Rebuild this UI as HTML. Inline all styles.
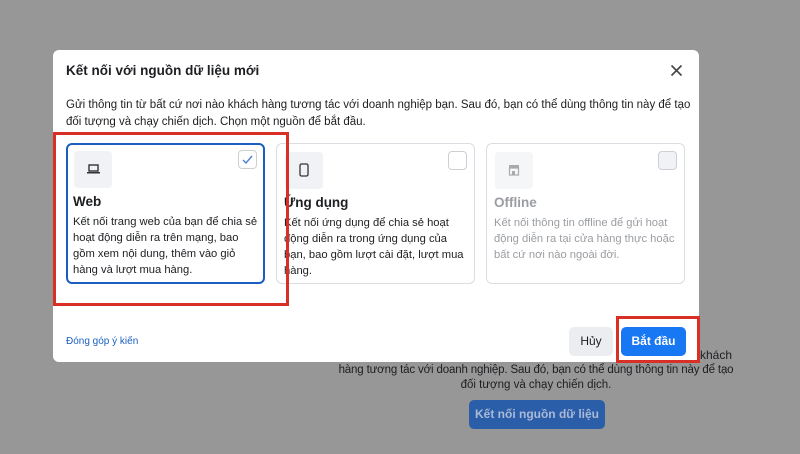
<!DOCTYPE html>
<html><head><meta charset="utf-8"><style>
*{margin:0;padding:0;box-sizing:border-box}
body{width:800px;height:454px;background:#979797;font-family:"Liberation Sans",sans-serif;position:relative;overflow:hidden;color:#1c1e21}
.a{position:absolute}
.bt{font-size:12px;color:#1c1e21;line-height:16px;text-align:center;white-space:nowrap}
.modal{left:53px;top:50px;width:646px;height:312px;background:#fff;border-radius:6px}
.card{position:absolute;top:143px;width:199px;height:141px;border:1px solid #dadde1;border-radius:6px;background:#fff}
.ic{position:absolute;left:8px;top:8px;width:38px;height:37px;background:#f0f2f5;border-radius:4px}
.cb{position:absolute;right:7px;top:7px;width:19px;height:19px;border:1px solid #ccd0d5;border-radius:4px;background:#fff}
.ct{position:absolute;left:7px;top:51px;font-size:13.5px;font-weight:bold}
.cd{position:absolute;left:7px;top:71px;font-size:11.2px;line-height:16px;color:#1c1e21;white-space:nowrap}
</style></head><body>
<div class="a bt" style="left:700px;top:347px;text-align:left">khách</div>
<div class="a bt" style="left:337px;top:362px;width:398px;font-size:11.5px;letter-spacing:-0.15px">hàng tương tác với doanh nghiệp. Sau đó, bạn có thể dùng thông tin này để tạo</div>
<div class="a bt" style="left:337px;top:377px;width:398px;font-size:11.5px">đối tượng và chạy chiến dịch.</div>
<div class="a" style="left:469px;top:400px;width:136px;height:29px;background:#2b5ea8;border-radius:5px;color:#aab9d6;font-size:12px;font-weight:bold;text-align:center;line-height:29px">Kết nối nguồn dữ liệu</div>

<div class="a modal">
<div class="a" style="left:13px;top:13px;font-size:13.5px;font-weight:bold">Kết nối với nguồn dữ liệu mới</div>
<svg class="a" style="left:617px;top:14px" width="13" height="13" viewBox="0 0 13 13"><path d="M1.5 1.5L11.5 11.5M11.5 1.5L1.5 11.5" stroke="#444" stroke-width="1.6"/></svg>
<div class="a" style="left:13px;top:47px;font-size:11.5px;line-height:17px;width:630px;white-space:nowrap">Gửi thông tin từ bất cứ nơi nào khách hàng tương tác với doanh nghiệp bạn. Sau đó, bạn có thể dùng thông tin này để tạo<br>đối tượng và chạy chiến dịch. Chọn một nguồn để bắt đầu.</div>
<div class="a" style="left:13px;top:286px;font-size:10px;color:#1a5fbf">Đóng góp ý kiến</div>
<div class="a" style="left:516px;top:277px;width:44px;height:29px;background:#ebedf0;border-radius:5px;font-size:12px;text-align:center;line-height:29px">Hủy</div>
<div class="a" style="left:568px;top:277px;width:65px;height:29px;background:#1877f2;border-radius:5px;font-size:12px;font-weight:bold;color:#fff;text-align:center;line-height:29px">Bắt đầu</div>
</div>

<div class="card" style="left:66px;border:2px solid #1a5fbf">
<div class="ic" style="left:6px;top:6px"><svg style="position:absolute;left:13px;top:13px" width="13" height="10"><rect x="2" y="1" width="9" height="6" fill="none" stroke="#333" stroke-width="1.4"/><rect x="0" y="8" width="13" height="1.5" fill="#333"/></svg></div>
<div class="cb" style="right:6px;top:5px"><svg width="17" height="17"><path d="M4 9l3 3 6-7" stroke="#4a7fd0" stroke-width="1.4" fill="none"/></svg></div>
<div class="ct" style="left:5px;top:49px">Web</div>
<div class="cd" style="left:5px;top:69px">Kết nối trang web của bạn để chia sẻ<br>hoạt động diễn ra trên mạng, bao<br>gồm xem nội dung, thêm vào giỏ<br>hàng và lượt mua hàng.</div>
</div>
<div class="card" style="left:276px">
<div class="ic"><svg style="position:absolute;left:14px;top:11px" width="10" height="14"><rect x="1" y="1" width="8" height="12" rx="1.5" fill="none" stroke="#333" stroke-width="1.3"/></svg></div>
<div class="cb"></div>
<div class="ct">Ứng dụng</div>
<div class="cd">Kết nối ứng dụng để chia sẻ hoạt<br>động diễn ra trong ứng dụng của<br>bạn, bao gồm lượt cài đặt, lượt mua<br>hàng.</div>
</div>
<div class="card" style="left:486px">
<div class="ic" style="background:#f5f6f7"><svg style="position:absolute;left:13px;top:12px" width="12" height="12"><rect x="1" y="1" width="10" height="3" fill="#aaa"/><rect x="1.5" y="4" width="9" height="7" fill="none" stroke="#aaa" stroke-width="1.2"/><rect x="4" y="7" width="3" height="4" fill="#aaa"/></svg></div>
<div class="cb" style="background:#f0f2f5"></div>
<div class="ct" style="color:#9a9da2">Offline</div>
<div class="cd" style="color:#9a9da2">Kết nối thông tin offline để gửi hoạt<br>động diễn ra tại cửa hàng thực hoặc<br>bất cứ nơi nào ngoài đời.</div>
</div>

<div class="a" style="left:53px;top:132px;width:236px;height:174px;border:3px solid #d93025"></div>
<div class="a" style="left:616px;top:316px;width:84px;height:47px;border:3px solid #d93025"></div>
</body></html>
